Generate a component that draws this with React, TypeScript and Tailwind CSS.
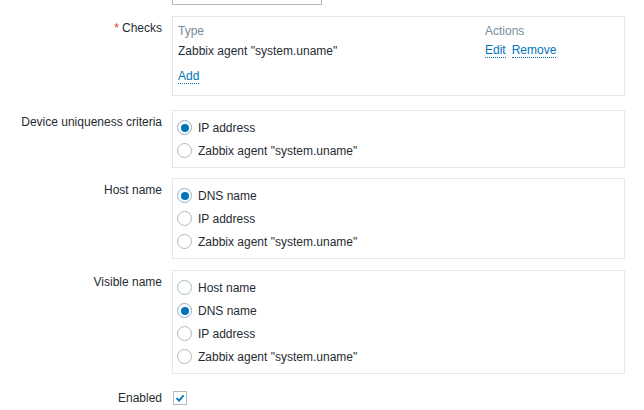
import React from "react";

const font = "font-['Liberation_Sans',Arial,sans-serif]";

function Radio({ label, checked }: { label: string; checked?: boolean }) {
  return (
    <div className="flex items-center h-[23px]">
      <span
        className={`w-[15px] h-[15px] rounded-full border flex items-center justify-center bg-white ${
          checked ? "border-[#8fb0c9]" : "border-[#acbbc2]"
        }`}
      >
        {checked && <span className="w-[8px] h-[8px] rounded-full bg-[#0275b8]" />}
      </span>
      <span className="ml-[6px]">{label}</span>
    </div>
  );
}

function Link({ children }: { children: React.ReactNode }) {
  return (
    <span className="text-[#0275b8] border-b border-dotted border-[#0275b8] leading-[13px]">
      {children}
    </span>
  );
}

function RadioBox({ options, selected }: { options: string[]; selected: number }) {
  return (
    <div className="w-[453px] border border-[#e4e8eb] px-[4px] py-[5px]">
      {options.map((o, i) => (
        <Radio key={o} label={o} checked={i === selected} />
      ))}
    </div>
  );
}

export default function App() {
  return (
    <div className={`${font} text-[12px] leading-[18px] text-[#1f2c33] bg-white w-[644px] h-[410px] overflow-hidden`}>
      {/* previous row (Update interval), scrolled out above */}
      <div className="flex -mt-[19px] h-[24px]">
        <div className="w-[162px]" />
        <div className="ml-[10px] w-[150px] h-[24px] border border-[#acbbc2]" />
      </div>

      {/* Checks */}
      <div className="flex mt-[11px]">
        <div className="w-[162px] text-right pt-[3px]">
          <span className="text-[#e33734] mr-[3px]">*</span>Checks
        </div>
        <div className="ml-[10px] w-[453px] h-[80px] border border-[#e4e8eb] pl-[5px] pt-[6px]">
          <div className="flex text-[#768d99] h-[16px] items-center">
            <div className="w-[307px]">Type</div>
            <div>Actions</div>
          </div>
          <div className="flex h-[24px] items-center">
            <div className="w-[307px]">Zabbix agent "system.uname"</div>
            <div className="flex gap-[6px]">
              <Link>Edit</Link>
              <Link>Remove</Link>
            </div>
          </div>
          <div className="mt-[4px]">
            <Link>Add</Link>
          </div>
        </div>
      </div>

      {/* Device uniqueness criteria */}
      <div className="flex mt-[14px]">
        <div className="w-[162px] text-right pt-[3px]">Device uniqueness criteria</div>
        <div className="ml-[10px]">
          <RadioBox options={["IP address", 'Zabbix agent "system.uname"']} selected={0} />
        </div>
      </div>

      {/* Host name */}
      <div className="flex mt-[10px]">
        <div className="w-[162px] text-right pt-[3px]">Host name</div>
        <div className="ml-[10px]">
          <RadioBox options={["DNS name", "IP address", 'Zabbix agent "system.uname"']} selected={0} />
        </div>
      </div>

      {/* Visible name */}
      <div className="flex mt-[11px]">
        <div className="w-[162px] text-right pt-[3px]">Visible name</div>
        <div className="ml-[10px]">
          <RadioBox
            options={["Host name", "DNS name", "IP address", 'Zabbix agent "system.uname"']}
            selected={1}
          />
        </div>
      </div>

      {/* Enabled */}
      <div className="flex items-center mt-[15px]">
        <div className="w-[162px] text-right">Enabled</div>
        <div className="ml-[11px] w-[14px] h-[14px] border border-[#acbbc2] flex items-center justify-center">
          <svg width="10" height="10" viewBox="0 0 10 10">
            <path d="M1.5 5.2 L4 7.6 L8.6 2.4" fill="none" stroke="#0275b8" strokeWidth="1.8" />
          </svg>
        </div>
      </div>
    </div>
  );
}
